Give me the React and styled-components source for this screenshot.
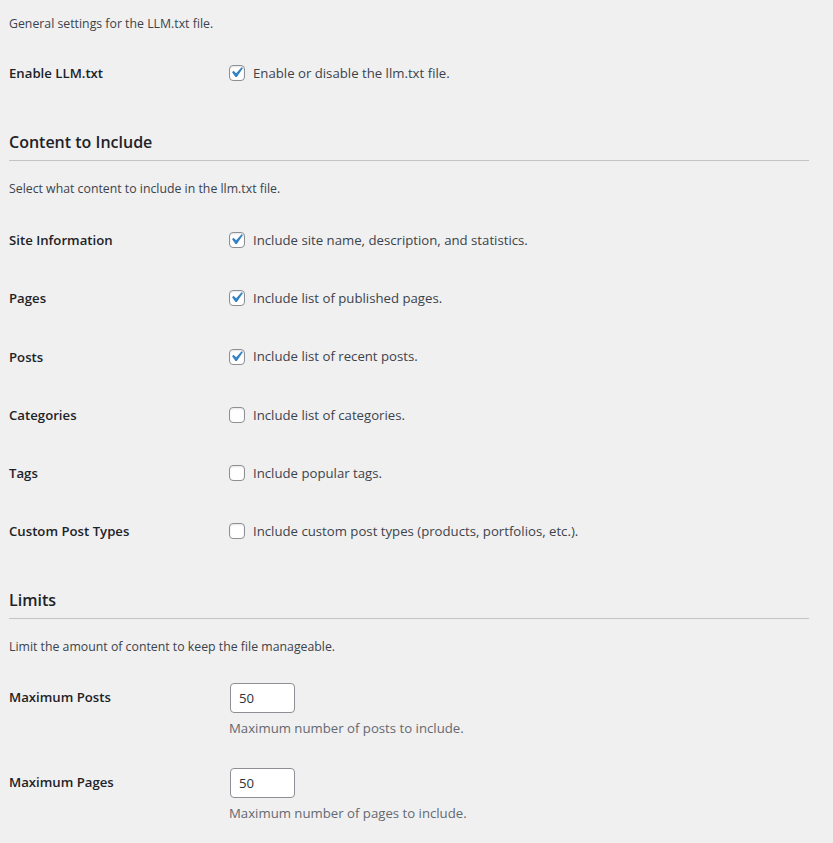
import React from "react";
import styled, { createGlobalStyle } from "styled-components";

const Global = createGlobalStyle`
  html, body { margin: 0; padding: 0; background: #f0f0f1; }
  body {
    font-family: "Open Sans", "Noto Sans", sans-serif;
    color: #3c434a;
    font-size: 13px;
    line-height: 1.4;
  }
`;

const Wrap = styled.div`
  padding: 14px 24px 0 9px;
  width: 800px;
`;

const SectionDesc = styled.p`
  margin: 0;
  font-size: 12.3px;
  line-height: 20px;
  color: #3c434a;
`;

const Heading = styled.h2`
  margin: 28px 0 0;
  padding-bottom: 6px;
  border-bottom: 1px solid #c3c4c7;
  font-size: 16px;
  line-height: 24px;
  font-weight: 600;
  color: #1d2327;
`;

const HeadingDesc = styled(SectionDesc)`
  margin-top: 18px;
`;

const Table = styled.div`
  display: flex;
  flex-direction: column;
  margin-top: ${(p) => p.$top}px;
`;

const Row = styled.div`
  display: grid;
  grid-template-columns: 210px 1fr;
`;

const Th = styled.div`
  padding: 20px 10px 20px 0;
  font-size: 13.2px;
  line-height: 18.2px;
  font-weight: 600;
  color: #1d2327;
`;

const Td = styled.div`
  padding: 15px 10px;
`;

const CheckLabel = styled.label`
  display: flex;
  align-items: center;
  gap: 8px;
  min-height: 28px;
  font-size: 13.2px;
  color: #3c434a;
`;

const Box = styled.span`
  box-sizing: border-box;
  width: 16px;
  height: 16px;
  border: 1px solid #8c8f94;
  border-radius: 4px;
  background: #fff;
  display: inline-flex;
  align-items: center;
  justify-content: center;
  flex-shrink: 0;
  box-shadow: inset 0 1px 2px rgba(0, 0, 0, 0.1);
`;

const CheckIcon = styled.svg`
  width: 21px;
  height: 21px;
  flex-shrink: 0;
  margin: -1px 0 0 -1px;
`;

const NumberInput = styled.input`
  box-sizing: border-box;
  width: 65px;
  height: 30px;
  margin: 0 1px;
  padding: 0 8px;
  border: 1px solid #8c8f94;
  border-radius: 4px;
  background: #fff;
  font-family: inherit;
  font-size: 13.2px;
  color: #2c3338;
  display: block;
  outline: none;
`;

const FieldDesc = styled.p`
  margin: 5px 0 0;
  font-size: 13.2px;
  line-height: 20px;
  color: #646970;
`;

const Check = () => (
  <CheckIcon viewBox="0 0 20 20">
    <path
      d="M14.83 4.89l1.34.94-5.81 8.38H9.02L5.78 9.67l1.34-1.25 2.57 2.4z"
      fill="#3582c4"
    />
  </CheckIcon>
);

const Checkbox = ({ checked, text }) => (
  <CheckLabel>
    <Box>{checked && <Check />}</Box>
    {text}
  </CheckLabel>
);

const contentRows = [
  ["Site Information", true, "Include site name, description, and statistics."],
  ["Pages", true, "Include list of published pages."],
  ["Posts", true, "Include list of recent posts."],
  ["Categories", false, "Include list of categories."],
  ["Tags", false, "Include popular tags."],
  ["Custom Post Types", false, "Include custom post types (products, portfolios, etc.)."],
];

const limitRows = [
  ["Maximum Posts", "50", "Maximum number of posts to include."],
  ["Maximum Pages", "50", "Maximum number of pages to include."],
];

export default function App() {
  return (
    <Wrap>
      <Global />
      <SectionDesc>General settings for the LLM.txt file.</SectionDesc>
      <Table $top={10}>
        <Row>
          <Th>Enable LLM.txt</Th>
          <Td>
            <Checkbox checked text="Enable or disable the llm.txt file." />
          </Td>
        </Row>
      </Table>

      <Heading>Content to Include</Heading>
      <HeadingDesc>Select what content to include in the llm.txt file.</HeadingDesc>
      <Table $top={12}>
        {contentRows.map(([label, checked, text]) => (
          <Row key={label}>
            <Th>{label}</Th>
            <Td>
              <Checkbox checked={checked} text={text} />
            </Td>
          </Row>
        ))}
      </Table>

      <Heading>Limits</Heading>
      <HeadingDesc>Limit the amount of content to keep the file manageable.</HeadingDesc>
      <Table $top={11}>
        {limitRows.map(([label, value, desc]) => (
          <Row key={label}>
            <Th>{label}</Th>
            <Td>
              <NumberInput type="number" defaultValue={value} readOnly />
              <FieldDesc>{desc}</FieldDesc>
            </Td>
          </Row>
        ))}
      </Table>
    </Wrap>
  );
}
